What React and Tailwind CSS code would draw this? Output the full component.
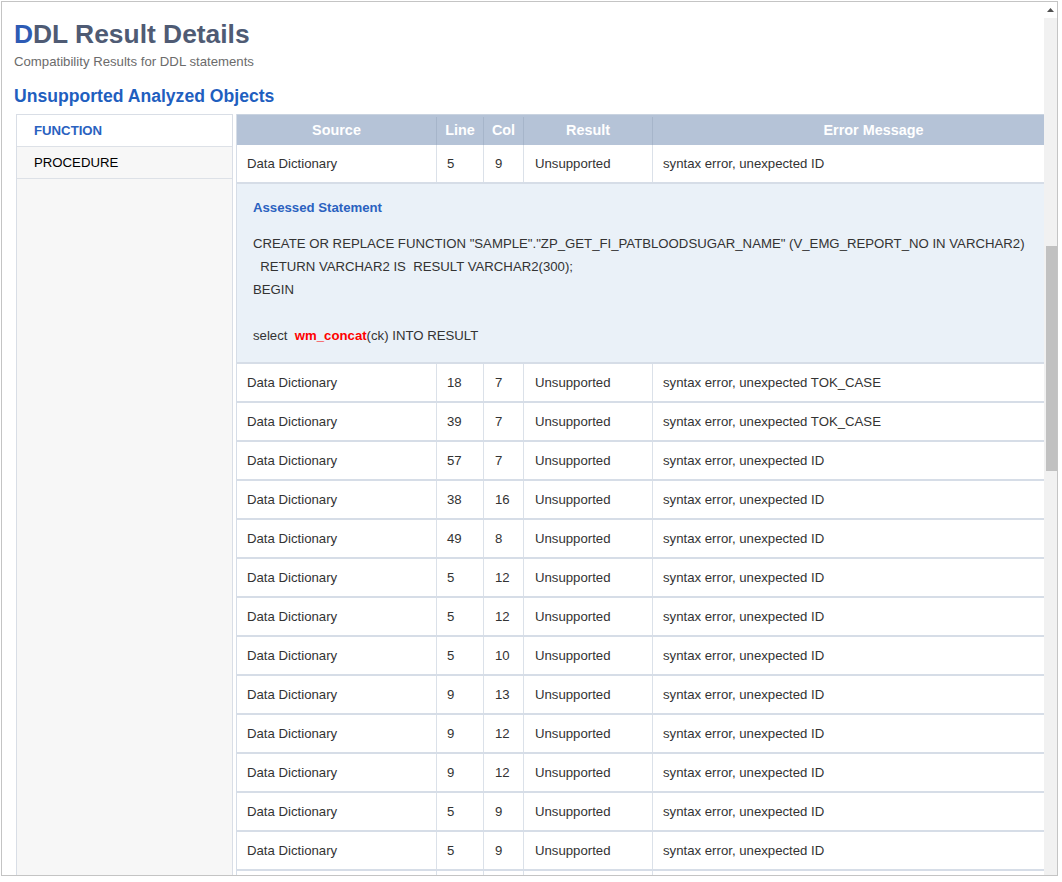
const rows = [
  { line: 18, col: 7, msg: 'syntax error, unexpected TOK_CASE' },
  { line: 39, col: 7, msg: 'syntax error, unexpected TOK_CASE' },
  { line: 57, col: 7, msg: 'syntax error, unexpected ID' },
  { line: 38, col: 16, msg: 'syntax error, unexpected ID' },
  { line: 49, col: 8, msg: 'syntax error, unexpected ID' },
  { line: 5, col: 12, msg: 'syntax error, unexpected ID' },
  { line: 5, col: 12, msg: 'syntax error, unexpected ID' },
  { line: 5, col: 10, msg: 'syntax error, unexpected ID' },
  { line: 9, col: 13, msg: 'syntax error, unexpected ID' },
  { line: 9, col: 12, msg: 'syntax error, unexpected ID' },
  { line: 9, col: 12, msg: 'syntax error, unexpected ID' },
  { line: 5, col: 9, msg: 'syntax error, unexpected ID' },
  { line: 5, col: 9, msg: 'syntax error, unexpected ID' },
]

const cols = 'grid grid-cols-[200px_47px_40px_129px_1fr]'

function Row({ line, col, msg, source = 'Data Dictionary', result = 'Unsupported' }) {
  return (
    <div className={`${cols} h-[39px] shrink-0 border-b-2 border-[#d6dde7] bg-white text-[13.2px] text-[#333]`}>
      <div className="flex items-center border-r border-[#dbe1e9] pl-[10px]">{source}</div>
      <div className="flex items-center border-r border-[#dbe1e9] pl-[10px]">{line}</div>
      <div className="flex items-center border-r border-[#dbe1e9] pl-[11px]">{col}</div>
      <div className="flex items-center border-r border-[#dbe1e9] pl-[11px]">{result}</div>
      <div className="flex items-center pl-[10px]">{msg}</div>
    </div>
  )
}

function Sidebar() {
  return (
    <div className="w-[217px] shrink-0 border border-b-0 border-[#d9dee6] bg-[#f7f7f7] text-[13.2px]">
      <div className="flex h-[32px] items-center border-b border-[#dde1e7] bg-white pl-[17px] font-bold text-[#2a62c0]">
        FUNCTION
      </div>
      <div className="flex h-[32px] items-center border-b border-[#dde1e7] pl-[17px] text-black">
        PROCEDURE
      </div>
    </div>
  )
}

function Detail() {
  return (
    <div className="shrink-0 border-b-2 border-[#d6dde7] bg-[#eaf1f8] px-[16px] pt-[16px] pb-[15px] text-[13.2px] text-[#333]">
      <div className="leading-[16px] font-bold text-[#2a62c0]">Assessed Statement</div>
      <div className="mt-[16px] leading-[23px] whitespace-pre">
        <div>CREATE OR REPLACE FUNCTION "SAMPLE"."ZP_GET_FI_PATBLOODSUGAR_NAME" (V_EMG_REPORT_NO IN VARCHAR2)</div>
        <div>  RETURN VARCHAR2 IS  RESULT VARCHAR2(300);</div>
        <div>BEGIN</div>
        <div>&nbsp;</div>
        <div>
          select  <span className="font-bold text-[#ff0000]">wm_concat</span>(ck) INTO RESULT
        </div>
      </div>
    </div>
  )
}

function ResultTable() {
  return (
    <div className="flex min-w-0 flex-1 flex-col border-l border-[#d6dde7]">
      <div className={`${cols} h-[31px] shrink-0 border-t border-[#c9d3e0] bg-[#b5c3d7] pt-[2px] text-[14.4px] font-bold text-white`}>
        <div className="flex items-center justify-center border-r border-[#a6b5ca]">Source</div>
        <div className="flex items-center justify-center border-r border-[#a6b5ca]">Line</div>
        <div className="flex items-center justify-center border-r border-[#a6b5ca]">Col</div>
        <div className="flex items-center justify-center border-r border-[#a6b5ca]">Result</div>
        <div className="flex items-center justify-center pl-[50px]">Error Message</div>
      </div>
      <Row line={5} col={9} msg="syntax error, unexpected ID" />
      <Detail />
      {rows.map((r, i) => (
        <Row key={i} {...r} />
      ))}
      <Row line="" col="" msg="" source="" result="" />
    </div>
  )
}

function Scrollbar() {
  return (
    <div className="flex w-[13px] shrink-0 flex-col bg-[#f1f1f1]">
      <div className="flex h-[16px] items-center justify-center bg-white">
        <svg width="7" height="4" viewBox="0 0 7 4">
          <polygon points="3.5,0 7,4 0,4" fill="#505050" />
        </svg>
      </div>
      <div className="mt-[228px] ml-[2px] h-[225px] bg-[#c1c1c1]" />
    </div>
  )
}

export default function App() {
  return (
    <div className="h-[882px] w-[1062px] overflow-hidden bg-white p-[1px] font-['Liberation_Sans',Arial,sans-serif]">
      <div className="flex h-[875px] w-[1057px] overflow-hidden border border-[#c4c4c4]">
        <div className="flex min-w-0 flex-1 flex-col overflow-hidden pt-[17px] pl-[12px]">
          <h1 className="text-[26.4px] leading-[30px] font-bold text-[#4f5b74]">
            <span className="text-[#2d5bb5]">D</span>DL Result Details
          </h1>
          <p className="mt-[5px] text-[13.2px] leading-[16px] text-[#6b6b6b]">
            Compatibility Results for DDL statements
          </p>
          <h2 className="mt-[15px] text-[17.6px] leading-[22px] font-bold text-[#1f5fbf]">
            Unsupported Analyzed Objects
          </h2>
          <div className="mt-[7px] ml-[2px] flex min-h-0 flex-1 gap-[3px] overflow-hidden">
            <Sidebar />
            <ResultTable />
          </div>
        </div>
        <Scrollbar />
      </div>
    </div>
  )
}
